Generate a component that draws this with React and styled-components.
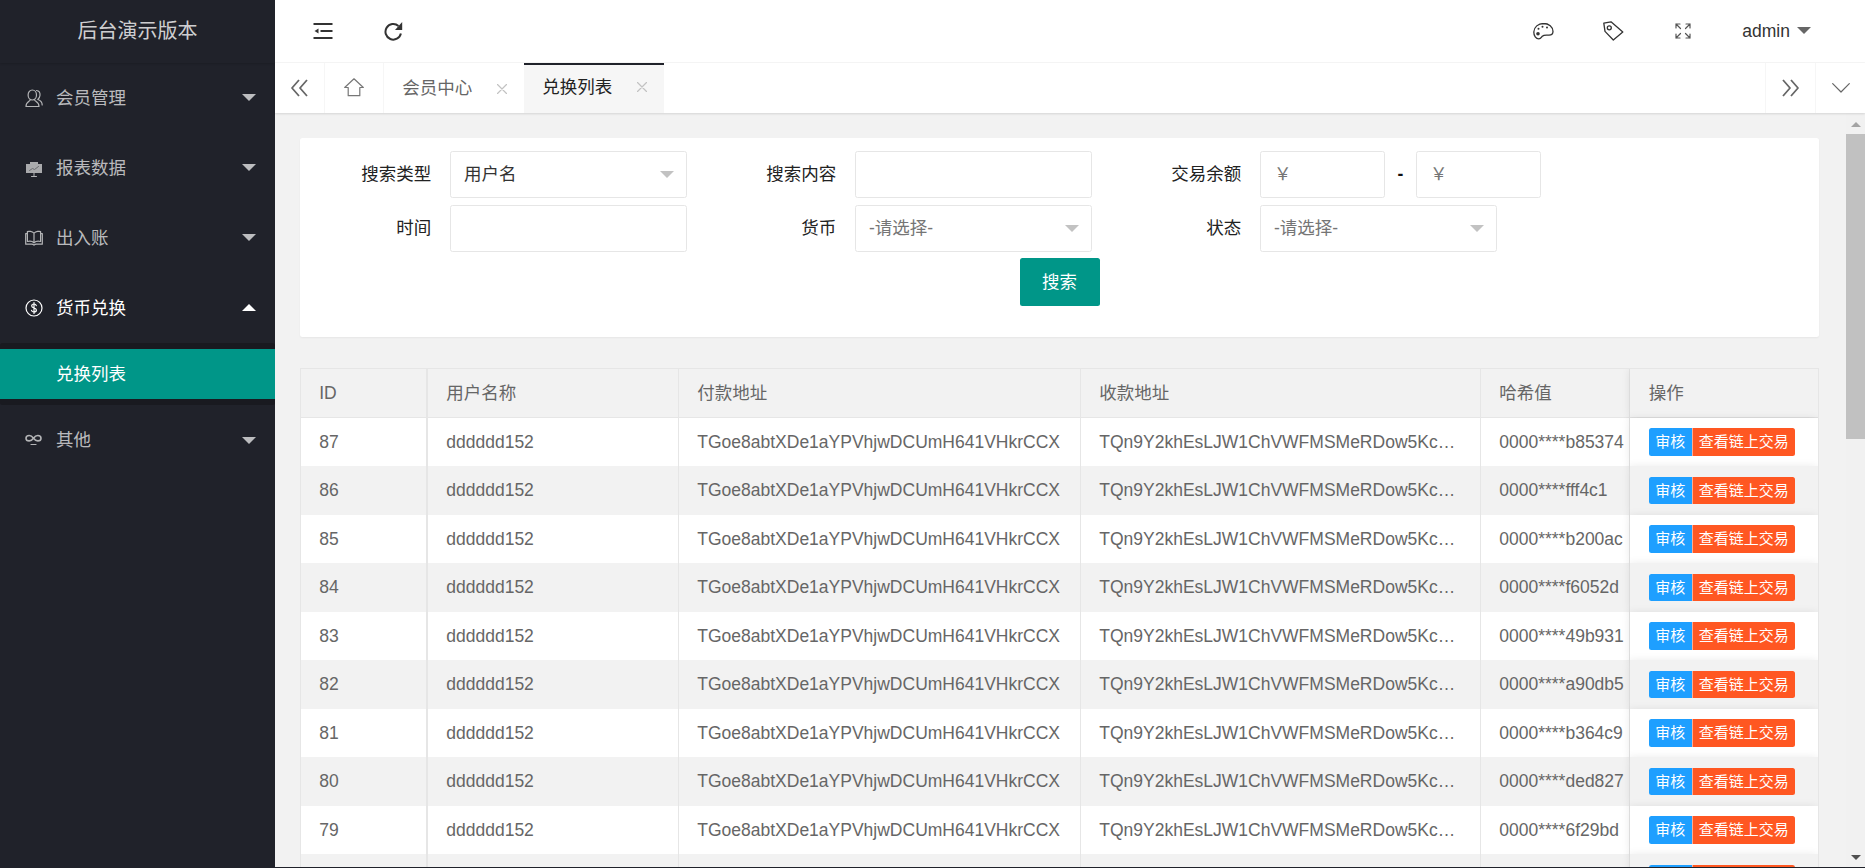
import React from "react";
import styled, { createGlobalStyle } from "styled-components";

const Global = createGlobalStyle`
  html, body { margin: 0; padding: 0; height: 100%; overflow: hidden; background: #20222a; }
  * { box-sizing: border-box; }
  body { font: 17.5px/1.5 "Liberation Sans", "Noto Sans CJK SC", sans-serif; color: #666; }
`;

const App_ = styled.div`
  display: grid;
  grid-template-columns: 275px 1fr;
  height: calc(100vh - 1px);
`;

/* ---------- sidebar ---------- */
const Side = styled.aside`
  background: #20222a;
  color: rgba(255, 255, 255, 0.7);
`;
const Logo = styled.div`
  height: 62.5px;
  line-height: 62.5px;
  text-align: center;
  font-size: 20px;
  color: rgba(255, 255, 255, 0.8);
  box-shadow: 0 1px 2px rgba(0, 0, 0, 0.15);
`;
const MenuItem = styled.div`
  display: flex;
  align-items: center;
  height: 70px;
  padding: 0 19.5px 0 25px;
  color: ${(p) => (p.$open ? "#fff" : "rgba(255,255,255,.7)")};
`;
const MenuIcon = styled.span`
  display: flex;
  width: 31px;
  flex: none;
  svg { display: block; }
`;
const MenuLabel = styled.span`
  flex: 1;
  padding-top: 1px;
`;
const Caret = styled.i`
  display: block;
  flex: none;
  width: 0;
  height: 0;
  border-left: 7.5px solid transparent;
  border-right: 7.5px solid transparent;
  border-${(p) => (p.$up ? "bottom" : "top")}: 7.5px solid ${(p) => p.$color};
`;
const SubMenu = styled.div`
  background: #191a20;
  border-radius: 2.5px;
  padding: 6.25px 0;
`;
const SubItem = styled.div`
  height: 50px;
  line-height: 50px;
  padding-left: 56px;
  background: #009688;
  color: #fff;
`;

/* ---------- header ---------- */
const Main = styled.main`
  display: flex;
  flex-direction: column;
  min-width: 0;
  min-height: 0;
`;
const Header = styled.header`
  display: flex;
  align-items: center;
  flex: none;
  height: 62.5px;
  padding: 0 54px 0 12.5px;
  background: #fff;
  border-bottom: 1px solid #f6f6f6;
  color: #333;
`;
const NavIcon = styled.span`
  display: flex;
  justify-content: center;
  align-items: center;
  width: 70px;
  svg { display: block; }
`;
const Spacer = styled.div`
  flex: 1;
`;
const UserName = styled.span`
  margin: 0 7px 0 24px;
`;

/* ---------- tabs ---------- */
const TabBar = styled.nav`
  display: flex;
  flex: none;
  height: 50px;
  background: #fff;
  box-shadow: 0 1px 2px rgba(0, 0, 0, 0.12);
  position: relative;
  z-index: 2;
`;
const TabCell = styled.div`
  display: flex;
  align-items: center;
  justify-content: center;
  flex: none;
  width: ${(p) => p.$w}px;
  border-${(p) => p.$side || "right"}: 1px solid #f6f6f6;
  svg { display: block; }
`;
const Tab = styled.div`
  display: flex;
  align-items: center;
  flex: none;
  width: 140px;
  padding-left: 18.75px;
  color: ${(p) => (p.$active ? "#222" : "#666")};
  background: ${(p) => (p.$active ? "#f6f6f6" : "#fff")};
  border-top: 2.5px solid ${(p) => (p.$active ? "#20222a" : "transparent")};
  padding-bottom: ${(p) => (p.$active ? "2.5px" : "0")};
  svg { display: block; margin-left: 24.75px; }
`;

/* ---------- content ---------- */
const Viewport = styled.div`
  display: flex;
  flex: 1;
  min-height: 0;
  background: #f2f2f2;
`;
const Scroll = styled.div`
  flex: 1;
  min-width: 0;
  overflow: hidden;
`;
const ScrollBar = styled.div`
  display: flex;
  flex-direction: column;
  flex: none;
  width: 19px;
  background: #f1f1f1;
`;
const ScrollButton = styled.div`
  display: flex;
  justify-content: center;
  align-items: ${(p) => (p.$up ? "flex-start" : "flex-end")};
  flex: none;
  height: 21px;
  padding: ${(p) => (p.$up ? "9.5px 0 0" : "0 0 7px")};
`;
const ScrollThumb = styled.div`
  flex: none;
  height: 305px;
  background: #c1c1c1;
`;
const ScrollArrow = styled.i`
  display: block;
  width: 0;
  height: 0;
  border-left: 5px solid transparent;
  border-right: 5px solid transparent;
  border-${(p) => (p.$up ? "bottom" : "top")}: 5px solid ${(p) => p.$color};
`;
const Page = styled.div`
  padding: 25px 27px 25px 25px;
`;
const Card = styled.section`
  background: #fff;
  border-radius: 2.5px;
  box-shadow: 0 1px 2px rgba(0, 0, 0, 0.05);
  padding: 13.5px 0 31px;
  margin-bottom: 31px;
`;
const FormRow = styled.div`
  display: flex;
  margin-bottom: 6.5px;
`;
const FormItem = styled.div`
  display: flex;
  width: 405px;
  flex: none;
`;
const Label = styled.label`
  flex: none;
  width: 150px;
  padding-right: 18.75px;
  text-align: right;
  line-height: 47px;
  color: #222;
`;
const Field = styled.div`
  display: flex;
  align-items: center;
  justify-content: space-between;
  height: 47px;
  width: ${(p) => p.$w || 237}px;
  flex: none;
  padding: 0 12.5px 0 13px;
  background: #fff;
  border: 1px solid #e6e6e6;
  border-radius: 2.5px;
  color: ${(p) => (p.$muted ? "#757575" : "#333")};
`;
const Dash = styled.span`
  flex: none;
  width: 31px;
  text-align: center;
  line-height: 47px;
  font-weight: 700;
  color: #111;
`;
const SearchRow = styled.div`
  display: flex;
  justify-content: center;
`;
const SearchButton = styled.button`
  width: 80px;
  height: 48px;
  border: 0;
  border-radius: 2.5px;
  background: #009688;
  color: #fff;
  font: inherit;
`;

const Table = styled.div`
  background: #fff;
  border: 1px solid #e6e6e6;
  overflow: hidden;
`;
const Row = styled.div`
  display: grid;
  grid-template-columns: 127px 251px 402px 400px 149px 1fr;
  height: 48.5px;
  background: ${(p) => (p.$head ? "#f2f2f2" : "#fff")};
  border-bottom: ${(p) => (p.$head ? "1px solid #e6e6e6" : "0")};
  &:nth-child(odd) { background: #f2f2f2; }
`;
const Cell = styled.div`
  display: flex;
  align-items: center;
  min-width: 0;
  padding: 0 ${(p) => (p.$tight ? 0 : 18.25)}px 0 18.25px;
  border-right: ${(p) => (p.$thick ? 2 : 1)}px solid #e6e6e6;
  white-space: nowrap;
`;
const ActionCell = styled.div`
  position: relative;
  z-index: 1;
  display: flex;
  align-items: center;
  padding-left: 18.75px;
  background: inherit;
  box-shadow: -1px 0 8px rgba(0, 0, 0, 0.08);
`;
const MiniButton = styled.button`
  flex: none;
  width: ${(p) => p.$w}px;
  height: 27.5px;
  padding: 0;
  border: 0;
  border-left: ${(p) => (p.$second ? "1px solid rgba(255,255,255,.5)" : "0")};
  border-radius: ${(p) => (p.$second ? "0 2.5px 2.5px 0" : "2.5px 0 0 2.5px")};
  background: ${(p) => p.$bg};
  color: #fff;
  font: 15px/27.5px "Liberation Sans", "Noto Sans CJK SC", sans-serif;
  white-space: nowrap;
`;

/* ---------- icons ---------- */
const Svg = ({ w, h = w, children, ...rest }) => (
  <svg width={w} height={h} viewBox={`0 0 ${w} ${h}`} fill="none" strokeLinecap="round" strokeLinejoin="round" {...rest}>
    {children}
  </svg>
);

const IconUser = () => (
  <Svg w={18} stroke="#b4b5b7" strokeWidth="1.2">
    <ellipse cx="7.3" cy="6" rx="4.2" ry="5" />
    <path d="M5.2 10.8C5.2 12.5 1 12.5 1 17.5h13c0-5-4.3-5-4.5-6.7" />
    <path d="M11.5 1.5c2.6.3 3.7 2.4 3.5 4.8-.1 1.8-1 3.2-2.2 4.2 2.4.8 4.4 2.8 4.4 5.5" />
  </Svg>
);
const IconChart = () => (
  <Svg w={18} h={18}>
    <rect x="1" y="5" width="16" height="9" fill="#a9aaac" />
    <rect x="5" y="3" width="8" height="2" fill="#a9aaac" />
    <path d="M4.5 11.5l3-2 2 1 4-3" stroke="#6a6b6f" strokeWidth="1" />
    <path d="M9 14v3.5M6.5 17.5h5" stroke="#b4b5b7" strokeWidth="1" />
  </Svg>
);
const IconBook = () => (
  <Svg w={18} h={16} stroke="#b4b5b7" strokeWidth="1.2">
    <path d="M9 3.2C7 1.2 3.6 1 2.4 1.6V11.5c2-.5 5-.3 6.6 1.3 1.6-1.6 4.6-1.8 6.6-1.3V1.6C14.4 1 11 1.2 9 3.2zM9 3.2v9.6" />
    <path d="M2.4 3.6H.7v10.6h6c1 0 1.7.3 2.3 1 .6-.7 1.3-1 2.3-1h6V3.6h-1.7" />
  </Svg>
);
const IconDollar = () => (
  <Svg w={18} stroke="#fff" strokeWidth="1.2">
    <circle cx="9" cy="9" r="8" />
    <path d="M11.3 6.6C11 5.4 10 5 9 5 7.7 5 6.7 5.8 6.7 7c0 2.5 4.7 1.5 4.7 4 0 1.2-1 2-2.4 2-1.2 0-2.2-.6-2.5-1.7M9 3.6v10.8" />
  </Svg>
);
const IconSenior = () => (
  <Svg w={17} h={12} stroke="#b4b5b7">
    <path strokeWidth="1.6" d="M8.5 4.2C7 2.2 5.5 1.5 4.2 1.5 2.3 1.5 1 2.8 1 4.2s1.3 2.7 3.2 2.7c1.3 0 2.8-.7 4.3-2.7 1.5-2 3-2.7 4.3-2.7 1.9 0 3.2 1.3 3.2 2.7s-1.3 2.7-3.2 2.7c-1.3 0-2.8-.7-4.3-2.7z" />
    <path strokeWidth="1.2" d="M6 10.5h5" />
  </Svg>
);
const IconShrink = () => (
  <Svg w={20} stroke="#333" strokeWidth="2">
    <path d="M.5 3h19M7.5 10h12M.5 17h19" strokeLinecap="butt" />
    <path d="M1.5 10l4-2.5v5z" fill="#333" stroke="none" />
  </Svg>
);
const IconRefresh = () => (
  <Svg w={20} stroke="#333" strokeWidth="2">
    <path d="M15.5 5A7.8 7.8 0 1 0 17.9 12.5" strokeLinecap="butt" />
    <path d="M19.2 1v8h-7.2z" fill="#333" stroke="none" />
  </Svg>
);
const IconPalette = () => (
  <Svg w={21} h={18} stroke="#333" strokeWidth="1.3">
    <path d="M10.5 1.5C5.2 1.5 1 5 .8 10c-.1 3.8 2.2 6.8 5 6.8 2 0 2.5-1.5 3.5-2.5 1-1 2.2-1.2 4.2-1.2h2.5c2.5 0 4-1.5 4-3.6 0-4.5-4.2-8-9.5-8z" />
    <circle cx="9.5" cy="4.8" r="1" fill="#333" stroke="none" />
    <circle cx="14" cy="5.5" r="1" fill="#333" stroke="none" />
    <circle cx="5.5" cy="6.8" r="1" fill="#333" stroke="none" />
    <circle cx="5" cy="11.8" r="1.8" fill="#333" stroke="none" />
  </Svg>
);
const IconTag = () => (
  <Svg w={21} h={20} stroke="#333" strokeWidth="1.3">
    <path d="M.8 2.2L8 .8 19.8 11 10.3 19 2 10.4z" />
    <circle cx="6.3" cy="6.8" r="2" />
  </Svg>
);
const IconFull = () => (
  <Svg w={16} stroke="#555" strokeWidth="1.2">
    <path d="M1 5V1h4M1 1l4.5 4.5M15 5V1h-4M15 1l-4.5 4.5M1 11v4h4M1 15l4.5-4.5M15 11v4h-4M15 15l-4.5-4.5" />
  </Svg>
);
const IconPrev = () => (
  <Svg w={18} stroke="#666" strokeWidth="1.8" strokeLinecap="butt">
    <path d="M9 1L2 9l7 8M17 1l-7 8 7 8" />
  </Svg>
);
const IconNext = () => (
  <Svg w={18} stroke="#666" strokeWidth="1.8" strokeLinecap="butt">
    <path d="M1 1l7 8-7 8M9 1l7 8-7 8" />
  </Svg>
);
const IconHome = () => (
  <Svg w={20} h={19} stroke="#777" strokeWidth="1.2">
    <path d="M10 .8L19.3 9.5h-3.5v8.2H4.2V9.5H.7z" />
  </Svg>
);
const IconDown = () => (
  <Svg w={18} h={10} stroke="#666" strokeWidth="1.2">
    <path d="M.7.7L9 9l8.3-8.3" />
  </Svg>
);
const IconClose = () => (
  <Svg w={10} stroke="#c2c2c2" strokeWidth="1.2">
    <path d="M.5.5l9 9M9.5.5l-9 9" />
  </Svg>
);

/* ---------- data ---------- */
const menu = [
  { label: "会员管理", icon: <IconUser /> },
  { label: "报表数据", icon: <IconChart /> },
  { label: "出入账", icon: <IconBook /> },
  { label: "货币兑换", icon: <IconDollar />, open: true },
  { label: "其他", icon: <IconSenior /> },
];
const hashes = ["b85374", "fff4c1", "b200ac", "f6052d", "49b931", "a90db5", "b364c9", "ded827", "6f29bd"];
const rows = hashes.map((h, i) => ({ id: 87 - i, hash: `0000****${h}` }));

export default function App() {
  return (
    <>
      <Global />
      <App_>
        <Side>
          <Logo>后台演示版本</Logo>
          {menu.map((m) => (
            <React.Fragment key={m.label}>
              <MenuItem $open={m.open}>
                <MenuIcon>{m.icon}</MenuIcon>
                <MenuLabel>{m.label}</MenuLabel>
                <Caret $up={m.open} $color={m.open ? "#fff" : "rgba(255,255,255,.7)"} />
              </MenuItem>
              {m.open && (
                <SubMenu>
                  <SubItem>兑换列表</SubItem>
                </SubMenu>
              )}
            </React.Fragment>
          ))}
        </Side>
        <Main>
          <Header>
            <NavIcon><IconShrink /></NavIcon>
            <NavIcon><IconRefresh /></NavIcon>
            <Spacer />
            <NavIcon><IconPalette /></NavIcon>
            <NavIcon><IconTag /></NavIcon>
            <NavIcon><IconFull /></NavIcon>
            <UserName>admin</UserName>
            <Caret $color="#666" />
          </Header>
          <TabBar>
            <TabCell $w={49.5}><IconPrev /></TabCell>
            <TabCell $w={59}><IconHome /></TabCell>
            <Tab>会员中心<IconClose /></Tab>
            <Tab $active>兑换列表<IconClose /></Tab>
            <Spacer />
            <TabCell $w={50} $side="left"><IconNext /></TabCell>
            <TabCell $w={50} $side="left"><IconDown /></TabCell>
          </TabBar>
          <Viewport>
            <Scroll>
              <Page>
                <Card>
                  <FormRow>
                    <FormItem>
                      <Label>搜索类型</Label>
                      <Field>用户名<Caret $color="#c2c2c2" /></Field>
                    </FormItem>
                    <FormItem>
                      <Label>搜索内容</Label>
                      <Field />
                    </FormItem>
                    <FormItem>
                      <Label>交易余额</Label>
                      <Field $w={125} $muted>￥</Field>
                      <Dash>-</Dash>
                      <Field $w={125} $muted>￥</Field>
                    </FormItem>
                  </FormRow>
                  <FormRow>
                    <FormItem>
                      <Label>时间</Label>
                      <Field />
                    </FormItem>
                    <FormItem>
                      <Label>货币</Label>
                      <Field $muted>-请选择-<Caret $color="#c2c2c2" /></Field>
                    </FormItem>
                    <FormItem>
                      <Label>状态</Label>
                      <Field $muted>-请选择-<Caret $color="#c2c2c2" /></Field>
                    </FormItem>
                  </FormRow>
                  <SearchRow>
                    <SearchButton>搜索</SearchButton>
                  </SearchRow>
                </Card>
                <Table>
                  <Row $head>
                    <Cell $thick>ID</Cell>
                    <Cell>用户名称</Cell>
                    <Cell>付款地址</Cell>
                    <Cell>收款地址</Cell>
                    <Cell>哈希值</Cell>
                    <ActionCell>操作</ActionCell>
                  </Row>
                  {rows.map((r) => (
                    <Row key={r.id}>
                      <Cell $thick>{r.id}</Cell>
                      <Cell>dddddd152</Cell>
                      <Cell>TGoe8abtXDe1aYPVhjwDCUmH641VHkrCCX</Cell>
                      <Cell>TQn9Y2khEsLJW1ChVWFMSMeRDow5Kc…</Cell>
                      <Cell $tight>{r.hash}</Cell>
                      <ActionCell>
                        <MiniButton $w={43} $bg="#1e9fff">审核</MiniButton>
                        <MiniButton $w={103} $bg="#ff5722" $second>查看链上交易</MiniButton>
                      </ActionCell>
                    </Row>
                  ))}
                  <Row>
                    <Cell $thick />
                    <Cell />
                    <Cell />
                    <Cell />
                    <Cell />
                    <ActionCell>
                      <MiniButton $w={43} $bg="#1e9fff" />
                      <MiniButton $w={103} $bg="#ff5722" $second />
                    </ActionCell>
                  </Row>
                </Table>
              </Page>
            </Scroll>
            <ScrollBar>
              <ScrollButton $up><ScrollArrow $up $color="#a3a3a3" /></ScrollButton>
              <ScrollThumb />
              <Spacer />
              <ScrollButton><ScrollArrow $color="#505050" /></ScrollButton>
            </ScrollBar>
          </Viewport>
        </Main>
      </App_>
    </>
  );
}
